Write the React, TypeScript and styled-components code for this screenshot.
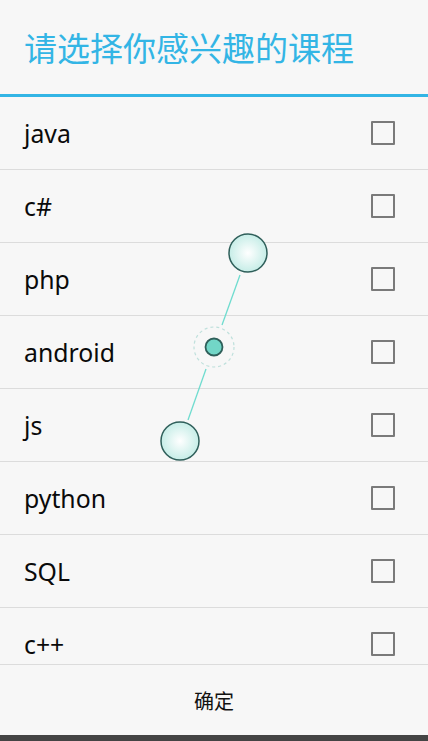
import styled, { createGlobalStyle } from "styled-components";

const courses = ["java", "c#", "php", "android", "js", "python", "SQL", "c++"];

const App = () => {
  return (
    <>
      <GlobalStyle />
      <Screen>
        <Header>
          <Title>请选择你感兴趣的课程</Title>
        </Header>
        <Divider />
        <List>
          {courses.map((name) => (
            <Row key={name}>
              <Label>{name}</Label>
              <CheckBox />
            </Row>
          ))}
        </List>
        <Footer>
          <ConfirmButton>确定</ConfirmButton>
        </Footer>
        <NavBar />
        <TouchOverlay />
      </Screen>
    </>
  );
};

// pinch gesture indicator drawn over the list
const TouchOverlay = () => (
  <Overlay width="428" height="741" viewBox="0 0 428 741">
    <defs>
      <radialGradient id="finger" cx="0.5" cy="0.5" r="0.5">
        <stop offset="0%" stopColor="#ffffff" />
        <stop offset="100%" stopColor="#c6ede7" />
      </radialGradient>
    </defs>
    <line x1="240" y1="275" x2="222" y2="325" stroke="#6fdccf" strokeWidth="1.3" />
    <line x1="206" y1="369" x2="188" y2="420" stroke="#6fdccf" strokeWidth="1.3" />
    <circle cx="214" cy="347" r="20" fill="none" stroke="#bfe0dc" strokeWidth="1.2" strokeDasharray="3 3" />
    <circle cx="214" cy="347" r="8.5" fill="#72d6c7" stroke="#2f5f5a" strokeWidth="1.8" />
    <circle cx="248" cy="253" r="19" fill="url(#finger)" stroke="#2f5f5a" strokeWidth="1.5" />
    <circle cx="180" cy="441" r="19" fill="url(#finger)" stroke="#2f5f5a" strokeWidth="1.5" />
  </Overlay>
);

const GlobalStyle = createGlobalStyle`
  html, body {
    margin: 0;
    padding: 0;
    background: #f7f7f7;
  }
  body {
    font-family: "Noto Sans", "Noto Sans CJK SC", sans-serif;
  }
`;

const Screen = styled.div`
  position: relative;
  width: 428px;
  height: 741px;
  display: flex;
  flex-direction: column;
  background: #f7f7f7;
  overflow: hidden;
`;

const Header = styled.div`
  height: 94px;
  display: flex;
  align-items: center;
  padding-left: 24px;
  box-sizing: border-box;
`;

const Title = styled.h1`
  margin: 0;
  font-size: 33px;
  font-weight: 400;
  color: #33b5e5;
  font-family: "Noto Sans CJK SC", sans-serif;
`;

const Divider = styled.div`
  height: 3px;
  background: #33b5e5;
`;

const List = styled.div`
  flex: 1;
  overflow: hidden;
  display: flex;
  flex-direction: column;
`;

const Row = styled.div`
  flex: 0 0 72px;
  display: flex;
  align-items: center;
  justify-content: space-between;
  padding: 0 33px 0 24px;
  border-bottom: 1px solid #dcdcdc;
`;

const Label = styled.span`
  font-size: 24.8px;
  line-height: 1;
  color: #0a0a0a;
`;

const CheckBox = styled.span`
  width: 24px;
  height: 24px;
  box-sizing: border-box;
  border: 2px solid #7a7a7a;
  border-radius: 1px;
`;

const Footer = styled.div`
  height: 71px;
  border-top: 1px solid #dcdcdc;
  box-sizing: border-box;
  display: flex;
  align-items: center;
  justify-content: center;
`;

const ConfirmButton = styled.span`
  font-size: 20px;
  color: #111;
  font-family: "Noto Sans CJK SC", sans-serif;
`;

const NavBar = styled.div`
  height: 6px;
  background: #444;
`;

const Overlay = styled.svg`
  position: absolute;
  left: 0;
  top: 0;
  pointer-events: none;
`;

export default App;
